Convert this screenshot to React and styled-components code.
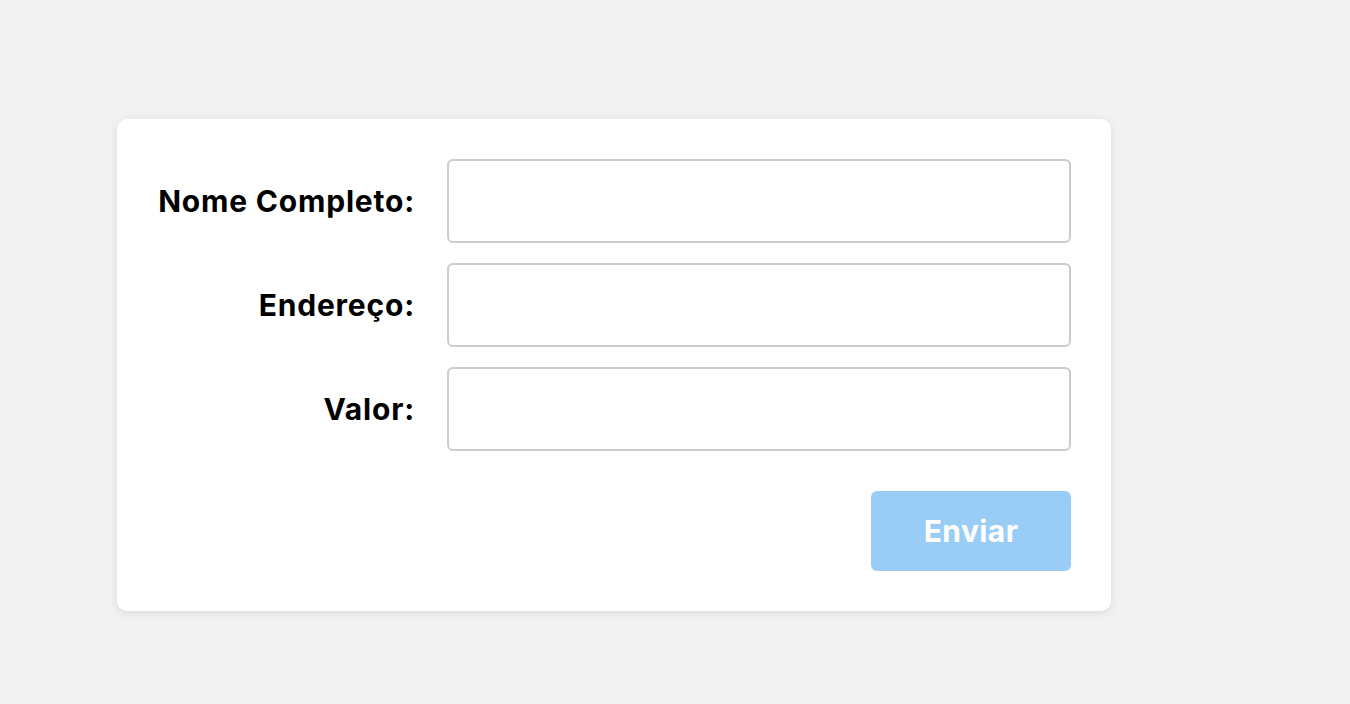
import React from "react";
import styled, { createGlobalStyle } from "styled-components";

const Global = createGlobalStyle`
  html, body { margin: 0; padding: 0; background: #f2f2f2; }
  body { font-family: Inter, "Noto Sans", "Liberation Sans", sans-serif; }
`;

const Page = styled.div`
  min-height: 704px;
  box-sizing: border-box;
  padding: 119px 0 0 117px;
`;

const Card = styled.form`
  width: 994px;
  box-sizing: border-box;
  padding: 40px;
  background: #fff;
  border-radius: 10px;
  box-shadow: 0 2px 8px rgba(0, 0, 0, 0.1);
  display: grid;
  grid-template-columns: 258px 1fr;
  column-gap: 32px;
  row-gap: 20px;
  align-items: center;
`;

const Label = styled.label`
  text-align: right;
  font-size: 30px;
  letter-spacing: 0.8px;
  font-weight: 700;
  color: #000;
  white-space: nowrap;
`;

const Input = styled.input`
  height: 84px;
  box-sizing: border-box;
  border: 2px solid #cccccc;
  border-radius: 6px;
  padding: 0 16px;
  font: inherit;
  font-size: 28px;
  background: #fff;
  outline: none;
`;

const Actions = styled.div`
  grid-column: 1 / -1;
  display: flex;
  justify-content: flex-end;
  margin-top: 20px;
`;

const Button = styled.button`
  width: 200px;
  height: 80px;
  border: none;
  border-radius: 6px;
  background: #99cdf5;
  color: #fff;
  font-family: inherit;
  font-size: 30px;
  letter-spacing: 0.4px;
  font-weight: 700;
  cursor: not-allowed;
`;

const fields = [
  { id: "nome", label: "Nome Completo:" },
  { id: "endereco", label: "Endereço:" },
  { id: "valor", label: "Valor:" },
];

export default function App() {
  return (
    <>
      <Global />
      <Page>
        <Card onSubmit={(e) => e.preventDefault()}>
          {fields.map((f) => (
            <React.Fragment key={f.id}>
              <Label htmlFor={f.id}>{f.label}</Label>
              <Input id={f.id} type="text" />
            </React.Fragment>
          ))}
          <Actions>
            <Button type="submit" disabled>Enviar</Button>
          </Actions>
        </Card>
      </Page>
    </>
  );
}
